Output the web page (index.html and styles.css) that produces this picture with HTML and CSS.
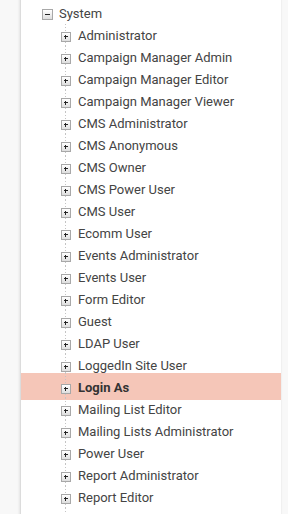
FILE: index.html
```html
<!DOCTYPE html>
<html lang="en">
  <head>
    <meta charset="UTF-8" />
    <meta name="viewport" content="width=device-width, initial-scale=1.0" />
    <title>Roles</title>
    <link rel="stylesheet" href="styles.css">
  </head>
  <body>
    <div class="panel">
      <div class="tree">
        <div class="row root"><span class="toggle plus"></span></div>
        <div class="row root"><span class="toggle minus"></span><span class="label">System</span></div>
        <div class="row child"><span class="toggle plus"></span><span class="label">Administrator</span></div>
        <div class="row child"><span class="toggle plus"></span><span class="label">Campaign Manager Admin</span></div>
        <div class="row child"><span class="toggle plus"></span><span class="label">Campaign Manager Editor</span></div>
        <div class="row child"><span class="toggle plus"></span><span class="label">Campaign Manager Viewer</span></div>
        <div class="row child"><span class="toggle plus"></span><span class="label">CMS Administrator</span></div>
        <div class="row child"><span class="toggle plus"></span><span class="label">CMS Anonymous</span></div>
        <div class="row child"><span class="toggle plus"></span><span class="label">CMS Owner</span></div>
        <div class="row child"><span class="toggle plus"></span><span class="label">CMS Power User</span></div>
        <div class="row child"><span class="toggle plus"></span><span class="label">CMS User</span></div>
        <div class="row child"><span class="toggle plus"></span><span class="label">Ecomm User</span></div>
        <div class="row child"><span class="toggle plus"></span><span class="label">Events Administrator</span></div>
        <div class="row child"><span class="toggle plus"></span><span class="label">Events User</span></div>
        <div class="row child"><span class="toggle plus"></span><span class="label">Form Editor</span></div>
        <div class="row child"><span class="toggle plus"></span><span class="label">Guest</span></div>
        <div class="row child"><span class="toggle plus"></span><span class="label">LDAP User</span></div>
        <div class="row child"><span class="toggle plus"></span><span class="label">LoggedIn Site User</span></div>
        <div class="row child selected"><span class="toggle plus"></span><span class="label">Login As</span></div>
        <div class="row child"><span class="toggle plus"></span><span class="label">Mailing List Editor</span></div>
        <div class="row child"><span class="toggle plus"></span><span class="label">Mailing Lists Administrator</span></div>
        <div class="row child"><span class="toggle plus"></span><span class="label">Power User</span></div>
        <div class="row child"><span class="toggle plus"></span><span class="label">Report Administrator</span></div>
        <div class="row child"><span class="toggle plus"></span><span class="label">Report Editor</span></div>
        <div class="row child"></div>
      </div>
    </div>
  </body>
</html>
```

FILE: styles.css
```css
/* page */
html, body {
    height: 100%;
}
body {
    margin: 0;
    overflow: hidden;
    background-color: #f8f8f8;
    font-family: Roboto, "Liberation Sans", Arial, sans-serif;
}

.panel {
    margin-left: 20px;
    width: 262px;
    min-height: 100%;
    box-sizing: border-box;
    background-color: #ffffff;
    border-left: 1px solid #dcdcdc;
    border-right: 1px solid #f0f0f0;
    box-shadow: -1px 0 2px rgba(0, 0, 0, 0.08);
}

.tree {
    margin-top: -20px;
}

/* rows */
.row {
    display: flex;
    align-items: center;
    height: 22px;
    box-sizing: border-box;
    font-size: 13px;
    color: #444444;
    white-space: nowrap;
}
.row.root {
    padding-left: 21px;
}
.row.root .label {
    margin-left: 6px;
}
.row.child {
    padding-left: 40px;
    background: repeating-linear-gradient(to bottom, #c4c4c4 0 1px, transparent 1px 3px) 44px 0 / 1px 100% no-repeat;
}
.row.child .label {
    margin-left: 7px;
}
.row.selected {
    height: 27px;
    margin: -3px 0 -2px;
    padding-top: 3px;
    padding-bottom: 2px;
    background-color: #f5c6b8;
    font-weight: bold;
    color: #333333;
}

/* expand / collapse boxes */
.toggle {
    position: relative;
    flex: none;
    box-sizing: border-box;
    border: 1px solid #a8a8a8;
    background: linear-gradient(#ffffff, #dedede);
}
.toggle.plus {
    width: 10px;
    height: 10px;
    margin-top: 4px;
}
.toggle.minus {
    width: 11px;
    height: 11px;
    margin-top: 2px;
}
.toggle::before,
.toggle::after {
    content: "";
    position: absolute;
    background-color: #222222;
}
.toggle::before {
    left: 2px;
    right: 2px;
    top: 50%;
    height: 1px;
    margin-top: -1px;
}
.toggle.minus::before {
    margin-top: 0;
}
.toggle.plus::after {
    top: 2px;
    bottom: 2px;
    left: 50%;
    width: 1px;
    margin-left: -1px;
}
.toggle.minus::after {
    display: none;
}
```
